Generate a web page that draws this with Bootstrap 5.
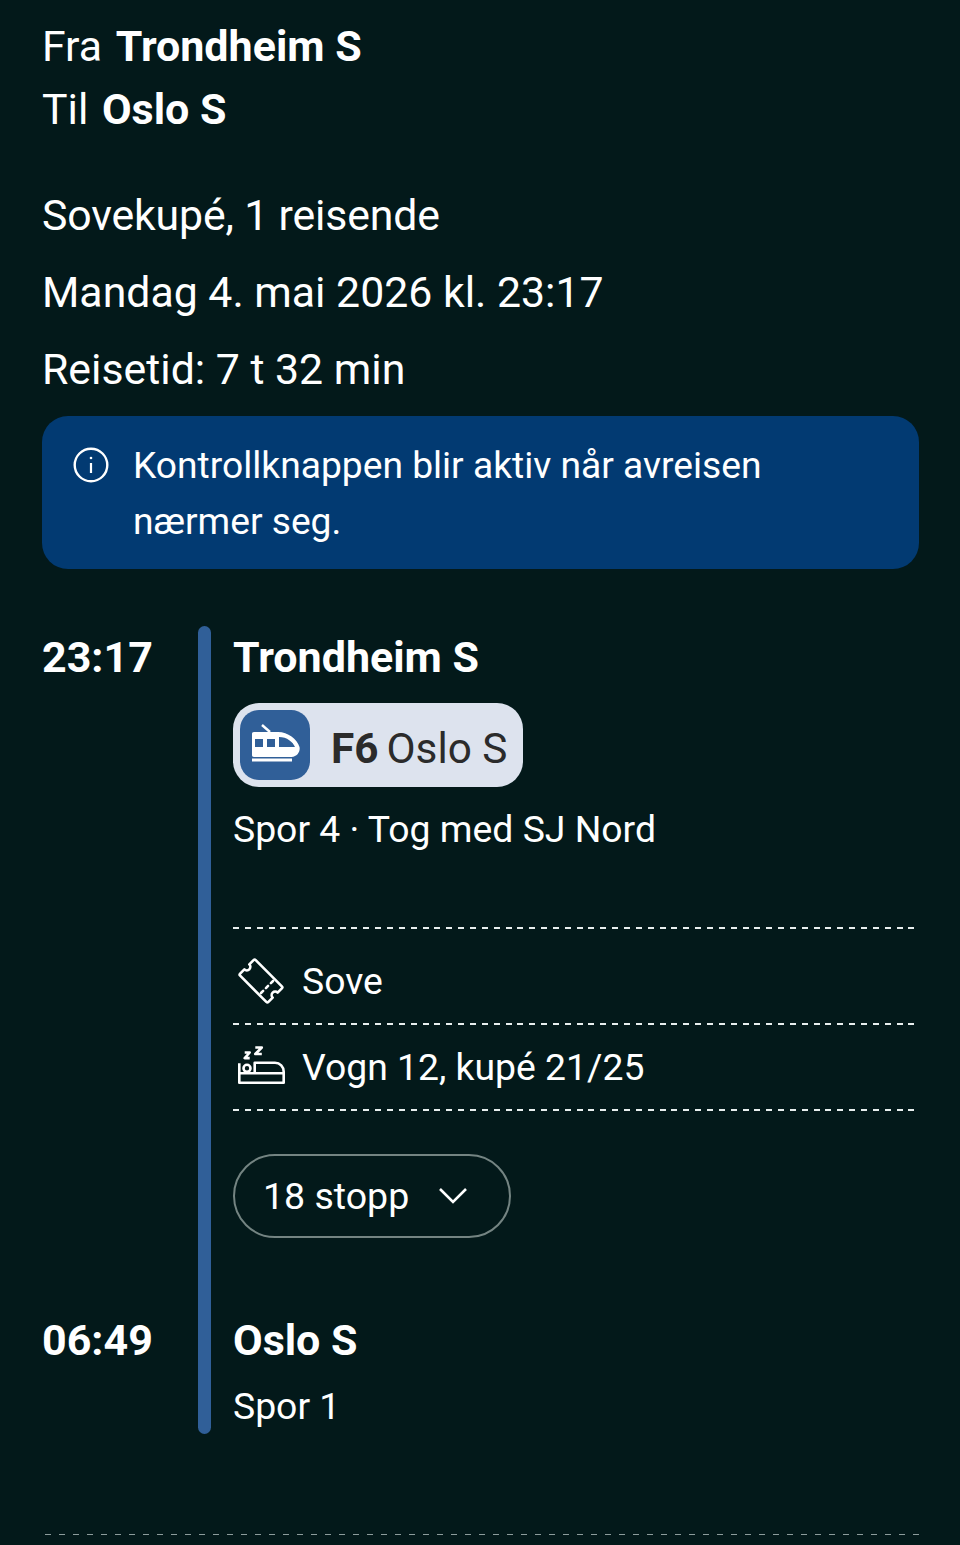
<!DOCTYPE html>
<html lang="no">
<head>
  <meta charset="UTF-8">
  <meta name="viewport" content="width=device-width, initial-scale=1.0">
  <title>Reise</title>
  <link rel="stylesheet" href="https://cdn.jsdelivr.net/npm/bootstrap@5.3.3/dist/css/bootstrap.min.css">
  <style>
    html, body { height: 100%; }
    body {
      background: #03191a;
      color: #fff;
      font-family: Roboto, "Liberation Sans", sans-serif;
      overflow: hidden;
    }
    .trip-page { padding: 15px 41px 0 42px; height: 1545px; }
    .route-line { font-size: 42.8px; line-height: 63px; }
    .route-line b { font-size: 43px; font-weight: 700; margin-left: 3px; }
    .trip-meta { margin-top: 36px; }
    .trip-meta div { font-size: 42.8px; line-height: 77px; height: 77px; }
    .trip-meta .meta-class { letter-spacing: -0.15px; }
    .info-box {
      background: #023a72;
      border-radius: 26px;
      margin-top: 8px;
      padding: 21px 32px 20px 31px;
      font-size: 37.2px;
      line-height: 56px;
      gap: 24px;
    }
    .info-box svg { flex: none; margin-top: 10px; }
    .journey {
      display: grid;
      grid-template-columns: 156px 13px 1fr;
      margin-top: 57px;
    }
    .stop-time { font-size: 43px; font-weight: 700; line-height: 63px; }
    .line-bar {
      grid-column: 2;
      grid-row: 1 / 3;
      background: #305f98;
      border-radius: 7px;
      height: 808px;
    }
    .leg-body { padding-left: 22px; padding-right: 2px; }
    .stop-name { font-size: 43px; font-weight: 700; line-height: 63px; }
    .line-chip {
      background: #dde3ee;
      color: #2b2b2b;
      border-radius: 26px;
      height: 84px;
      width: 290px;
      margin-top: 14px;
      padding: 7px 0 0 7px;
      gap: 21px;
      font-size: 42.3px;
    }
    .chip-icon {
      background: #305f98;
      border-radius: 19px;
      width: 70px;
      height: 70px;
    }
    .chip-label { line-height: 78px; }
    .chip-label b { font-weight: 700; margin-right: 8px; }
    .track-text { font-size: 37.35px; line-height: 56px; margin-top: 14px; }
    .dash-rule {
      height: 2px;
      background: repeating-linear-gradient(90deg, #e8eeee 0 6px, transparent 6px 11.85px);
    }
    .first-rule { margin-top: 70px; }
    .seat-row { gap: 17px; font-size: 37.35px; }
    .seat-sove { height: 94px; padding-top: 10px; }
    .seat-vogn { height: 84px; }
    .seat-row svg { flex: none; }
    .stops-btn {
      background: transparent;
      color: #fff;
      border: 2px solid #748482;
      border-radius: 42px;
      height: 84px;
      width: 278px;
      margin-top: 43px;
      padding: 0 0 0 28px;
      gap: 29px;
      font-size: 37.5px;
    }
    .end-stop { padding-top: 71px; }
    .track-end { margin-top: 6px; }
    .bottom-rule {
      height: 1px;
      margin-top: 100px;
      margin-left: 3px;
      background: repeating-linear-gradient(90deg, #8d9c9c 0 6px, transparent 6px 14px);
    }
  </style>
</head>
<body>
  <div class="trip-page">
    <div class="route-line">Fra <b>Trondheim S</b></div>
    <div class="route-line">Til <b>Oslo S</b></div>

    <div class="trip-meta">
      <div class="meta-class">Sovekupé, 1 reisende</div>
      <div>Mandag 4. mai 2026 kl. 23:17</div>
      <div>Reisetid: 7 t 32 min</div>
    </div>

    <div class="info-box d-flex">
      <svg width="36" height="36" viewBox="0 0 36 36" fill="none" stroke="#fff" stroke-width="2.4">
        <circle cx="18" cy="18" r="16.3"/>
        <path d="M18 16v10" stroke-width="2.2"/>
        <circle cx="18" cy="11" r="1.3" fill="#fff" stroke="none"/>
      </svg>
      <div>Kontrollknappen blir aktiv når avreisen nærmer seg.</div>
    </div>

    <div class="journey">
      <div class="stop-time">23:17</div>
      <div class="line-bar"></div>
      <div class="leg-body">
        <div class="stop-name">Trondheim S</div>
        <div class="line-chip d-flex">
          <div class="chip-icon d-flex align-items-center justify-content-center">
            <svg width="70" height="70" viewBox="0 0 70 70">
              <path d="M22 15l8 7" stroke="#fff" stroke-width="2.4" fill="none"/>
              <path fill="#fff" fill-rule="evenodd" d="M14 22h24c10 0 19 7 21.500 15 1 4-2 10-8 10H14c-1.500 0-2-.8-2-2V24c0-1.200.5-2 2-2zM15 29v8h8v-8zm12 0v8h8v-8zm12-2v10h16c-2-5-8-10-16-10z"/>
              <rect x="12" y="48.500" width="40" height="3" fill="#fff"/>
            </svg>
          </div>
          <div class="chip-label"><b>F6</b>Oslo S</div>
        </div>
        <div class="track-text">Spor 4 · Tog med SJ Nord</div>
        <div class="dash-rule first-rule"></div>
        <div class="seat-row seat-sove d-flex align-items-center">
          <svg width="52" height="52" viewBox="0 0 52 52" fill="none" stroke="#fff" stroke-width="2.6" stroke-linejoin="round" stroke-linecap="round">
            <g transform="translate(28 26) rotate(45)">
              <path d="M-18.500 -11H18.500a1.500 1.500 0 0 1 1.500 1.500V-3.500a3.500 3.500 0 0 0 0 7V9.500A1.500 1.500 0 0 1 18.500 11H-18.500a1.500 1.500 0 0 1-1.500-1.500V3.500a3.500 3.500 0 0 0 0-7V-9.500A1.500 1.500 0 0 1-18.500 -11z"/>
              <path d="M8.500 -8.500v3M8.500 -1.500v3M8.500 5.500v3"/>
            </g>
          </svg>
          <span>Sove</span>
        </div>
        <div class="dash-rule"></div>
        <div class="seat-row seat-vogn d-flex align-items-center">
          <svg width="52" height="52" viewBox="0 0 52 52" fill="none" stroke="#fff" stroke-width="2.6" stroke-linejoin="round">
            <path d="M6.300 32.300h44.400v9.400H6.300z"/>
            <circle cx="14" cy="27.300" r="3.500"/>
            <path d="M21.700 32V21.700H42c5 0 8.700 4 8.700 9V32M6.300 32V22.300"/>
            <path d="M11.700 11.500h5l-5 5.600h5M22.300 6.500h6.500l-6.500 6.500h6.500"/>
          </svg>
          <span>Vogn 12, kupé 21/25</span>
        </div>
        <div class="dash-rule"></div>
        <button type="button" class="stops-btn d-flex align-items-center">
          <span>18 stopp</span>
          <svg width="30" height="18" viewBox="0 0 30 18" fill="none" stroke="#fff" stroke-width="2.6"><path d="M2 2l13 13L28 2"/></svg>
        </button>
      </div>
      <div class="stop-time end-stop">06:49</div>
      <div class="leg-body end-stop">
        <div class="stop-name">Oslo S</div>
        <div class="track-text track-end">Spor 1</div>
      </div>
    </div>

    <div class="bottom-rule"></div>
  </div>
  <script src="https://cdn.jsdelivr.net/npm/bootstrap@5.3.3/dist/js/bootstrap.bundle.min.js"></script>
</body>
</html>
